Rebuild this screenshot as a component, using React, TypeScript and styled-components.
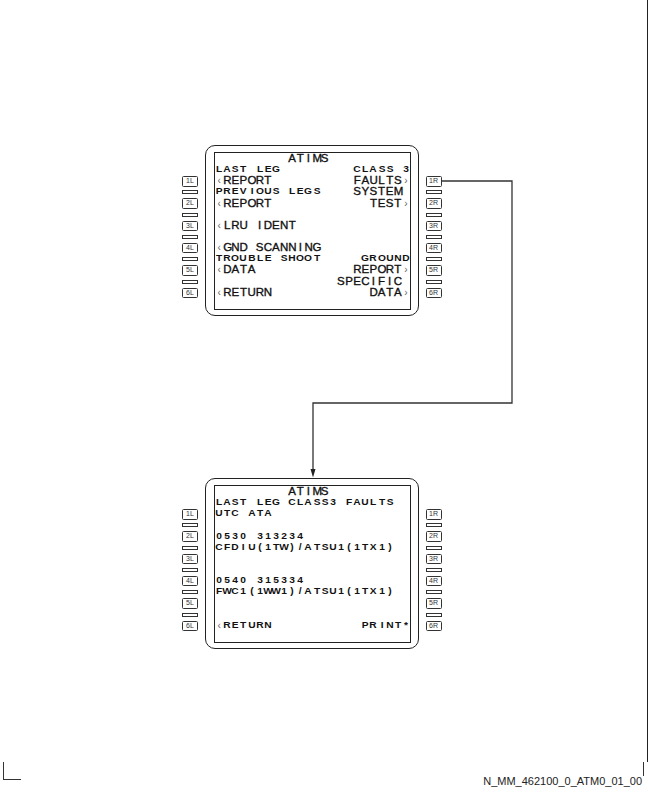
import React from 'react';
import styled, { createGlobalStyle } from 'styled-components';

const CELL = 195 / 24;
const LINE = 156 / 14;

type Kind = 'L' | 'S' | 'C';
type LineSpec = { left?: string; right?: string; ls?: Kind; rs?: Kind };

const Global = createGlobalStyle`
  html, body { margin: 0; padding: 0; background: #fff; }
  body {
    width: 648px;
    height: 792px;
    overflow: hidden;
    font-family: "Liberation Sans", Arial, sans-serif;
    color: #222;
  }
`;

const Page = styled.div`
  width: 648px;
  height: 792px;
  display: flex;
  flex-direction: column;
`;

const Frame = styled.div`
  position: relative;
  box-sizing: border-box;
  width: 647.5px;
  height: 762px;
  border-right: 1.5px solid #222;
  padding: 145px 0 0 182px;
  display: flex;
  flex-direction: column;
  gap: 162px;
`;

const Unit = styled.div`
  display: flex;
  align-items: flex-start;
  gap: 7px;
`;

const KeyColumn = styled.div`
  display: grid;
  grid-template-rows: repeat(14, ${LINE}px);
  padding-top: 8.5px;
  width: 16px;
  justify-items: center;
  align-items: center;
`;

const Key = styled.div`
  box-sizing: border-box;
  width: 16px;
  height: 10.5px;
  border: 1px solid #333;
  border-radius: 1.5px;
  font-family: "Liberation Sans", Arial, sans-serif;
  font-size: 7px;
  line-height: 8.5px;
  text-align: center;
  color: #333;
`;

const Bar = styled.div`
  box-sizing: border-box;
  width: 16px;
  height: 4px;
  border: 1px solid #333;
`;

const Bezel = styled.div`
  border: 1.5px solid #222;
  border-radius: 10px;
  padding: 6px 6.5px 5px 8px;
`;

const Screen = styled.div`
  border: 1px solid #222;
  width: 195px;
  height: 156px;
  display: flex;
  flex-direction: column;
`;

const Row = styled.div`
  display: flex;
  height: ${LINE}px;
  align-items: center;
`;

const Cell = styled.span<{ $kind: Kind }>`
  flex: none;
  display: inline-block;
  width: ${CELL}px;
  text-align: center;
  white-space: pre;
  font-family: "Liberation Sans", Arial, sans-serif;
  font-weight: ${(p) => (p.$kind === 'S' ? 700 : 400)};
  font-size: ${(p) => (p.$kind === 'L' ? 11.5 : p.$kind === 'S' ? 8.5 : 10)}px;
  line-height: ${LINE}px;
  color: ${(p) => (p.$kind === 'C' ? '#666' : '#111')};
  -webkit-text-stroke: ${(p) => (p.$kind === 'L' ? '0.35px #111' : '0')};
  transform: ${(p) => (p.$kind === 'S' ? 'scaleX(1.2)' : 'none')};
`;

const Connector = styled.svg`
  position: absolute;
  left: 0;
  top: 0;
  pointer-events: none;
`;

const Footer = styled.div`
  display: flex;
  align-items: flex-start;
  height: 30px;
`;

const CornerMark = styled.div`
  box-sizing: border-box;
  margin-left: 3px;
  width: 18px;
  height: 18px;
  border-left: 1px solid #333;
  border-bottom: 1px solid #333;
`;

const FooterRight = styled.div`
  margin-left: auto;
  margin-right: 4px;
  display: flex;
  align-items: flex-start;
`;

const Code = styled.span`
  margin-top: 13px;
  font-family: "Liberation Sans", Arial, sans-serif;
  font-size: 11px;
  line-height: 13px;
  color: #222;
`;

const Tick = styled.div`
  width: 0;
  height: 14px;
  border-left: 1px solid #333;
  margin-left: 1px;
`;

const kindOf = (ch: string, base: Kind): Kind => (ch === '‹' || ch === '›' ? 'C' : base);

function buildCells(spec: LineSpec) {
  const cells: { ch: string; kind: Kind }[] = Array.from({ length: 24 }, () => ({ ch: ' ', kind: 'L' as Kind }));
  if (spec.left) {
    Array.from(spec.left).forEach((ch, i) => {
      if (i < 24) cells[i] = { ch, kind: kindOf(ch, spec.ls ?? 'L') };
    });
  }
  if (spec.right) {
    const chars = Array.from(spec.right);
    const start = 24 - chars.length;
    chars.forEach((ch, i) => {
      cells[start + i] = { ch, kind: kindOf(ch, spec.rs ?? 'L') };
    });
  }
  return cells;
}

const Display: React.FC<{ lines: LineSpec[] }> = ({ lines }) => (
  <Bezel>
    <Screen>
      {Array.from({ length: 14 }, (_, i) => {
        const cells = buildCells(lines[i] ?? {});
        return (
          <Row key={i}>
            {cells.map((c, j) => (
              <Cell key={j} $kind={c.kind}>
                {c.ch}
              </Cell>
            ))}
          </Row>
        );
      })}
    </Screen>
  </Bezel>
);

const Keys: React.FC<{ side: 'L' | 'R' }> = ({ side }) => (
  <KeyColumn>
    {Array.from({ length: 14 }, (_, i) => {
      if (i >= 2 && i <= 12 && i % 2 === 0) return <Key key={i}>{`${i / 2}${side}`}</Key>;
      if (i >= 3 && i <= 11 && i % 2 === 1) return <Bar key={i} />;
      return <span key={i} />;
    })}
  </KeyColumn>
);

const topLines: LineSpec[] = [
  { left: '         ATIMS' },
  { left: 'LAST LEG', ls: 'S', right: 'CLASS 3', rs: 'S' },
  { left: '‹REPORT', right: 'FAULTS›' },
  { left: 'PREVIOUS LEGS', ls: 'S', right: 'SYSTEM ' },
  { left: '‹REPORT', right: 'TEST›' },
  {},
  { left: '‹LRU IDENT' },
  {},
  { left: '‹GND SCANNING' },
  { left: 'TROUBLE SHOOT', ls: 'S', right: 'GROUND', rs: 'S' },
  { left: '‹DATA', right: 'REPORT›' },
  { right: 'SPECIFIC ' },
  { left: '‹RETURN', right: 'DATA›' },
  {},
];

const bottomLines: LineSpec[] = [
  { left: '         ATIMS' },
  { left: 'LAST LEG CLASS3 FAULTS', ls: 'S' },
  { left: 'UTC ATA', ls: 'S' },
  {},
  { left: '0530 313234', ls: 'S' },
  { left: 'CFDIU(1TW)/ATSU1(1TX1)', ls: 'S' },
  {},
  {},
  { left: '0540 315334', ls: 'S' },
  { left: 'FWC1(1WW1)/ATSU1(1TX1)', ls: 'S' },
  {},
  {},
  { left: '‹RETURN', ls: 'S', right: 'PRINT*', rs: 'S' },
  {},
];

export default function App() {
  return (
    <Page>
      <Global />
      <Frame>
        <Unit>
          <Keys side="L" />
          <Display lines={topLines} />
          <Keys side="R" />
        </Unit>
        <Unit>
          <Keys side="L" />
          <Display lines={bottomLines} />
          <Keys side="R" />
        </Unit>
        <Connector width={646} height={762} viewBox="0 0 646 762">
          <path d="M442 181 H512 V403 H313 V470" fill="none" stroke="#333" strokeWidth={1.3} />
          <polygon points="310.5,469 315.5,469 313,477.5" fill="#222" />
        </Connector>
      </Frame>
      <Footer>
        <CornerMark />
        <FooterRight>
          <Code>N_MM_462100_0_ATM0_01_00</Code>
          <Tick />
        </FooterRight>
      </Footer>
    </Page>
  );
}
